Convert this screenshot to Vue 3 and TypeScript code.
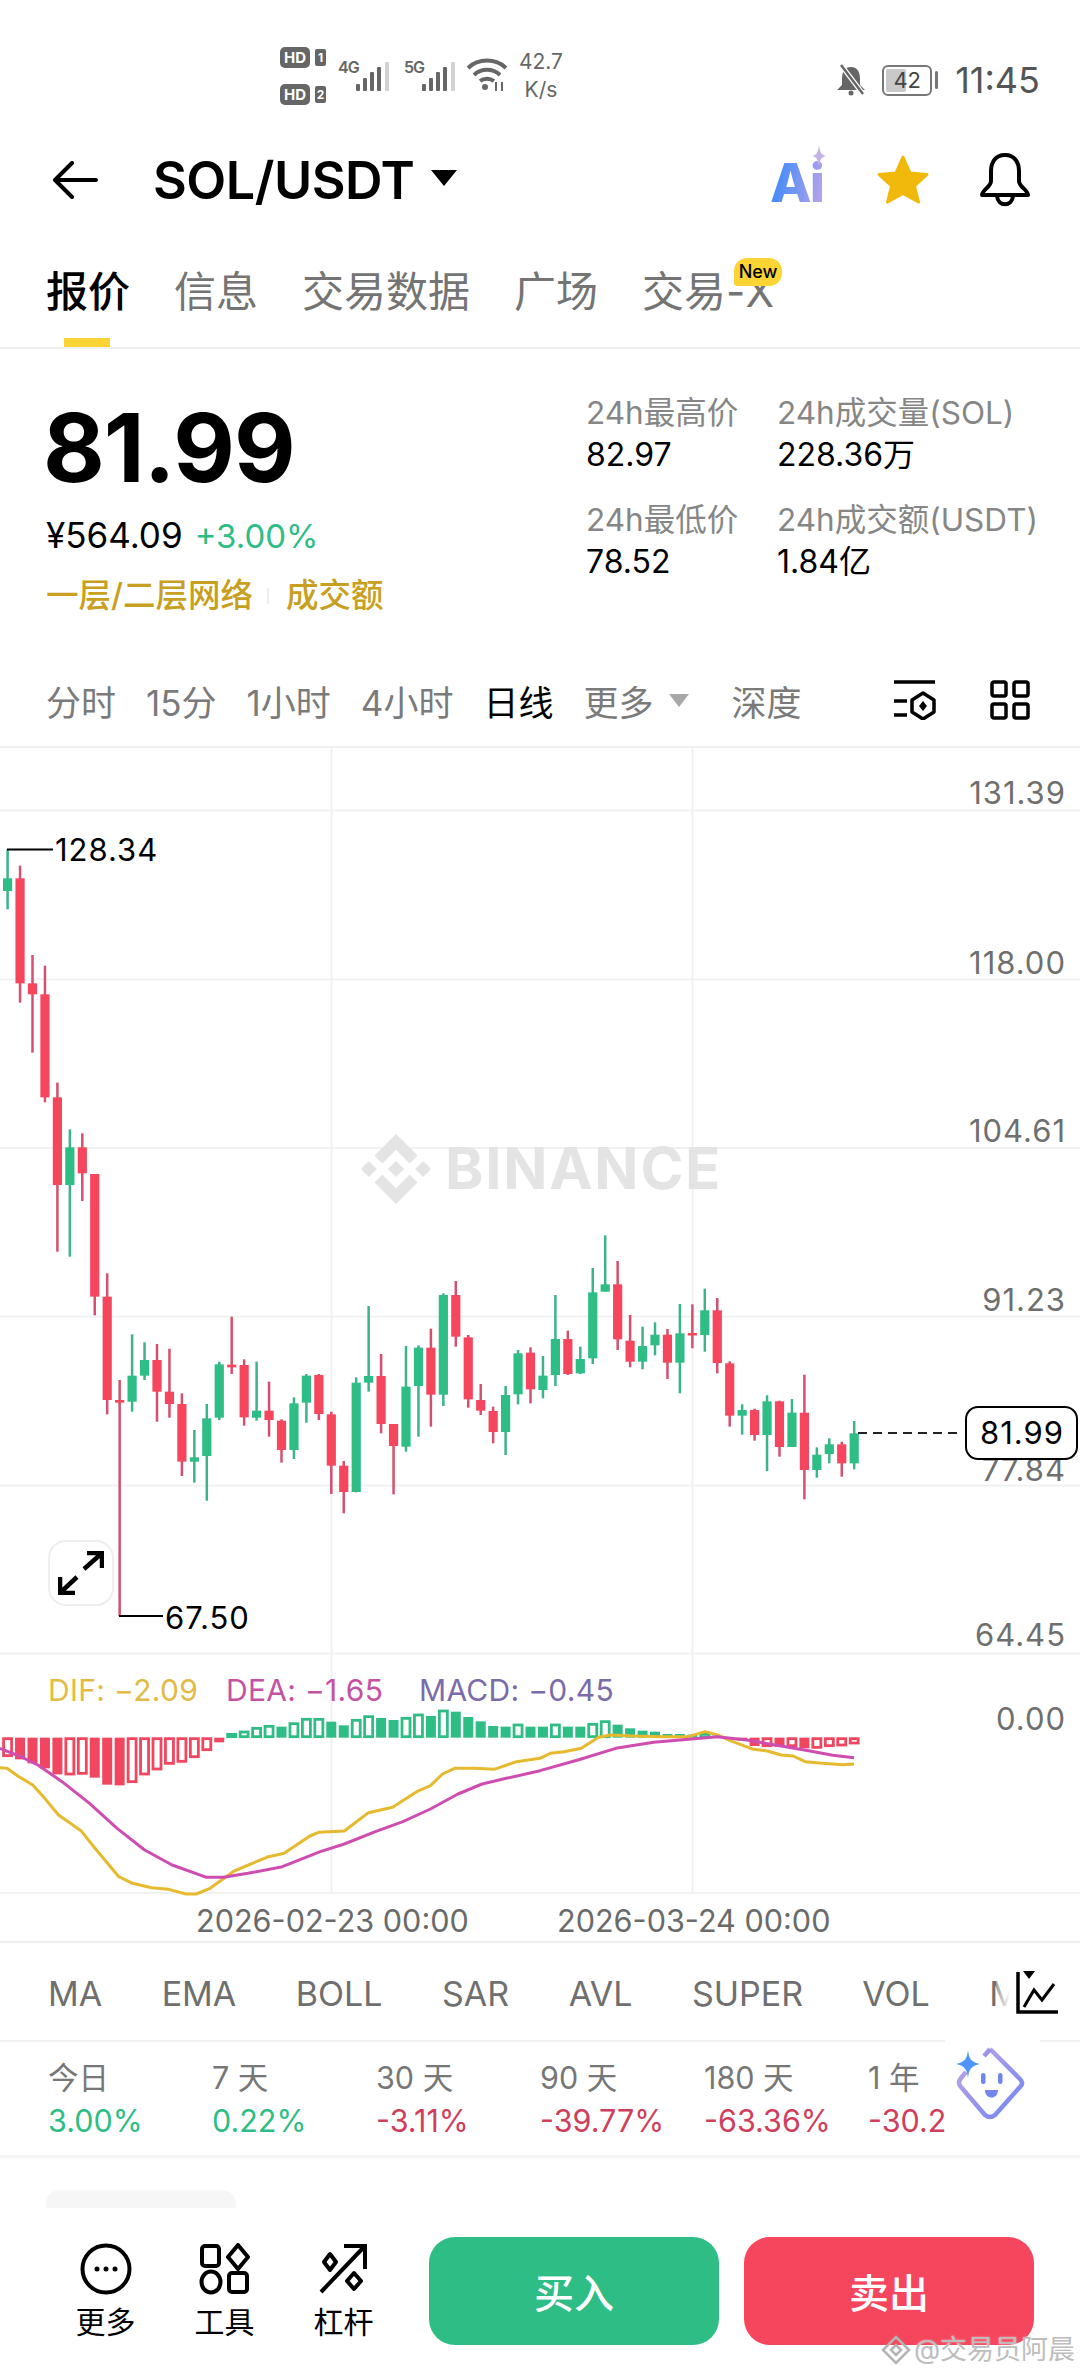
<template>
  <div class="page">
    <!-- status bar -->
    <div class="status-bar">
      <div class="sims">
        <div class="sim"><span class="hd">HD</span><span class="sim-no">1</span></div>
        <div class="sim"><span class="hd">HD</span><span class="sim-no">2</span></div>
      </div>
      <span class="net net-first">4G</span>
      <svg class="signal" width="34" height="30" viewBox="0 0 34 30">
        <rect x="0" y="22" width="4" height="7" rx="1" fill="#666" />
        <rect x="7" y="16" width="4" height="13" rx="1" fill="#666" />
        <rect x="14" y="10" width="4" height="19" rx="1" fill="#666" />
        <rect x="21" y="5" width="4" height="24" rx="1" fill="#666" />
        <rect x="29" y="0" width="4" height="29" rx="1" fill="#d2d2d2" />
      </svg>
      <span class="net">5G</span>
      <svg class="signal" width="34" height="30" viewBox="0 0 34 30">
        <rect x="0" y="22" width="4" height="7" rx="1" fill="#666" />
        <rect x="7" y="16" width="4" height="13" rx="1" fill="#666" />
        <rect x="14" y="10" width="4" height="19" rx="1" fill="#666" />
        <rect x="21" y="5" width="4" height="24" rx="1" fill="#666" />
        <rect x="29" y="0" width="4" height="29" rx="1" fill="#d2d2d2" />
      </svg>
      <svg class="wifi" width="40" height="34" viewBox="0 0 40 34" fill="none" stroke="#666" stroke-width="4">
        <path d="M1 10 C11 0 29 0 39 10" />
        <path d="M7 17 C14 10 26 10 33 17" />
        <path d="M13 23 C17 20 23 20 27 23" />
        <circle cx="18" cy="29" r="3" fill="#666" stroke="none" />
        <path d="M29 24 L29 33 M35 33 L35 24" stroke-width="2" />
      </svg>
      <div class="speed"><span>42.7</span><span>K/s</span></div>
      <div class="status-right">
        <svg width="34" height="32" viewBox="0 0 34 32">
          <path d="M17 3 C10 3 8 9 8 15 L8 21 L3 26 L31 26 L26 21 L26 15 C26 9 24 3 17 3 Z" fill="#666" />
          <circle cx="17" cy="29" r="2.5" fill="#666" />
          <path d="M7 1 L29 30" stroke="#fff" stroke-width="5" />
          <path d="M7 1 L29 30" stroke="#666" stroke-width="2.5" />
        </svg>
        <div class="battery">
          <div class="battery-body"><span class="battery-fill"></span><span class="battery-text">42</span></div>
          <span class="battery-cap"></span>
        </div>
        <span class="clock">11:45</span>
      </div>
    </div>

    <!-- title row -->
    <div class="nav">
      <svg class="back" width="46" height="38" viewBox="0 0 46 38" fill="none" stroke="#000" stroke-width="4" stroke-linecap="round" stroke-linejoin="round">
        <path d="M20 2 L3 19 L20 36 M3 19 L44 19" />
      </svg>
      <span class="pair">SOL/USDT</span>
      <span class="pair-caret"></span>
      <div class="nav-icons">
        <div class="ai-badge">
          <span class="ai-text">Ai</span>
          <svg class="ai-spark" width="14" height="22" viewBox="0 0 14 22"><path d="M7 0 C8 7 9 10 14 11 C9 12 8 15 7 22 C6 15 5 12 0 11 C5 10 6 7 7 0 Z" fill="#c5b4ea" /></svg>
        </div>
        <svg width="54" height="50" viewBox="0 0 54 50">
          <path d="M27 2 L34 18 L51 19.500 L38.500 31 L42.500 47 L27 38.500 L11.500 47 L15.500 31 L3 19.500 L20 18 Z" fill="#f0b90b" stroke="#f0b90b" stroke-width="3" stroke-linejoin="round" />
        </svg>
        <svg width="50" height="54" viewBox="0 0 50 54" fill="none" stroke="#000" stroke-width="4" stroke-linejoin="round">
          <path d="M25 2 C15 2 11 10 11 18 L11 28 C11 34 2 37 2 42 L48 42 C48 37 39 34 39 28 L39 18 C39 10 35 2 25 2 Z" />
          <path d="M17 43 C18 54 32 54 33 43" />
        </svg>
      </div>
    </div>

    <!-- tabs -->
    <div class="tabs">
      <span class="tab tab-active">报价</span>
      <span class="tab">信息</span>
      <span class="tab">交易数据</span>
      <span class="tab">广场</span>
      <span class="tab tab-new">交易-X<em class="new-badge">New</em></span>
    </div>

    <!-- price block -->
    <div class="summary">
      <div class="summary-left">
        <div class="last-price">81.99</div>
        <div class="sub-price"><span>¥564.09</span><span class="up">+3.00%</span></div>
        <div class="tags"><span>一层/二层网络</span><i class="tag-sep"></i><span>成交额</span></div>
      </div>
      <div class="stats">
        <div v-for="s in stats" :key="s.label" class="stat">
          <div class="stat-label">{{ s.label }}</div>
          <div class="stat-value">{{ s.value }}</div>
        </div>
      </div>
    </div>

    <!-- intervals -->
    <div class="intervals">
      <span>分时</span>
      <span>15分</span>
      <span>1小时</span>
      <span>4小时</span>
      <span class="interval-active">日线</span>
      <span class="interval-more">更多<i class="more-caret"></i></span>
      <span class="interval-depth">深度</span>
      <div class="interval-icons">
        <svg width="42" height="40" viewBox="0 0 42 40" fill="none" stroke="#000" stroke-width="3.500">
          <path d="M0 2 L41 2 M0 21 L13 21 M0 35 L13 35" />
          <path d="M29 13 L40 20 L40 32 L29 39 L18 32 L18 20 Z" stroke-linejoin="round" />
          <path d="M29 21 L33 26 L29 31 L25 26 Z" fill="#000" stroke="none" />
        </svg>
        <svg width="40" height="40" viewBox="0 0 40 40" fill="none" stroke="#000" stroke-width="3.500">
          <rect x="2" y="2" width="14" height="14" rx="2" />
          <rect x="24" y="2" width="14" height="14" rx="2" />
          <rect x="2" y="24" width="14" height="14" rx="2" />
          <rect x="24" y="24" width="14" height="14" rx="2" />
        </svg>
      </div>
    </div>

    <!-- chart + macd, everything on one canvas -->
    <div class="chart">
      <svg class="chart-svg" width="1080" height="1193" viewBox="0 748 1080 1193">
        <line v-for="y in gridY" :key="y" x1="0" x2="1080" :y1="y" :y2="y" class="grid" />
        <line x1="331.500" x2="331.500" y1="748" y2="1893" class="grid" />
        <line x1="692.500" x2="692.500" y1="748" y2="1893" class="grid" />

        <g>
          <path transform="translate(361 1134) scale(0.553)" fill="#e4e4e4" d="M38.73 53.2L63.3 28.63l24.58 24.58 14.3-14.3L63.3 0 24.43 38.87l14.3 14.33zM0 63.31l14.3-14.3 14.3 14.3-14.3 14.3L0 63.31zM38.73 73.41L63.3 97.98l24.58-24.58 14.31 14.29-.01.01L63.3 126.61 24.43 87.74l-.02-.02 14.32-14.31zM97.98 63.31l14.3-14.3 14.31 14.3-14.3 14.3-14.31-14.3zM77.83 63.3L63.3 48.77 52.56 59.51l-1.24 1.24-2.54 2.54 14.52 14.52 14.53-14.51z" />
          <text x="445" y="1189" class="mark-text">BINANCE</text>
        </g>

        <g v-for="c in candles" :key="c.x">
          <rect :x="c.x - 1.250" :y="c.high" width="2.500" :height="c.low - c.high" :fill="c.wick" />
          <rect :x="c.x - 4.600" :y="c.top" width="9.200" :height="c.h" :fill="c.color" />
        </g>

        <path d="M7 849.500 L53 849.500" stroke="#000" stroke-width="2" fill="none" />
        <text x="55" y="861" class="lbl-black">128.34</text>
        <path d="M119 1616 L163 1616" stroke="#000" stroke-width="2" fill="none" />
        <text x="165" y="1629" class="lbl-black">67.50</text>

        <text v-for="a in axis" :key="a.t" x="1066" :y="a.y" class="lbl-axis">{{ a.t }}</text>

        <path d="M858 1433 L963 1433" stroke="#222" stroke-width="2" stroke-dasharray="9 6" fill="none" />
        <rect x="966" y="1407" width="111" height="52" rx="12" fill="#fff" stroke="#000" stroke-width="2" />
        <text x="1022" y="1444" class="lbl-last">81.99</text>

        <text x="48" y="1701" class="lgd" fill="#e3bb44">DIF: −2.09</text>
        <text x="226" y="1701" class="lgd" fill="#c551a3">DEA: −1.65</text>
        <text x="419" y="1701" class="lgd" fill="#7a6bab">MACD: −0.45</text>

        <template v-for="b in bars" :key="b.x">
          <rect v-if="b.hollow" :x="b.x - 4" :y="b.y + 1" width="8" :height="Math.max(b.h - 2, 1)" fill="#fff" :stroke="b.color" stroke-width="2.800" />
          <rect v-else :x="b.x - 5" :y="b.y" width="10" :height="b.h" :fill="b.color" />
        </template>
        <polyline :points="difPoints" fill="none" stroke="#e6b92e" stroke-width="3" stroke-linejoin="round" />
        <polyline :points="deaPoints" fill="none" stroke="#cf4db0" stroke-width="3" stroke-linejoin="round" />

        <text x="196" y="1932" class="lbl-date">2026-02-23 00:00</text>
        <text x="557" y="1932" class="lbl-date">2026-03-24 00:00</text>
      </svg>
      <div class="expand">
        <svg width="46" height="44" viewBox="0 0 46 44" fill="none" stroke="#000" stroke-width="4.500">
          <path d="M26 18 L43 3 M29 2 L44 2 L44 17" />
          <path d="M19 26 L3 41 M2 26 L2 42 L17 42" />
        </svg>
      </div>
    </div>

    <!-- indicators -->
    <div class="indicators">
      <div class="indicator-scroll">
        <span>MA</span><span>EMA</span><span>BOLL</span><span>SAR</span><span>AVL</span><span>SUPER</span>
        <i class="indicator-sep"></i>
        <span>VOL</span><span>MACD</span>
      </div>
      <div class="indicator-btn">
        <svg width="44" height="44" viewBox="0 0 44 44" fill="none" stroke="#000">
          <path d="M2 1 L2 41 L42 41" stroke-width="3.500" />
          <path d="M7 0 L19 0 L13 8 Z" fill="#000" stroke="none" />
          <path d="M8 36 L18 19 L26 29 L38 13" stroke-width="3" />
        </svg>
      </div>
    </div>

    <!-- period changes -->
    <div class="periods">
      <div class="period-scroll">
        <div v-for="p in periods" :key="p.name" class="period">
          <div class="period-name">{{ p.name }}</div>
          <div :class="p.up ? 'period-up' : 'period-down'">{{ p.value }}</div>
        </div>
      </div>
      <div class="robot">
        <svg width="72" height="74" viewBox="0 0 72 74" fill="none">
          <defs>
            <linearGradient id="robotStroke" x1="0" y1="0" x2="1" y2="1">
              <stop offset="0" stop-color="#c4a6e6" />
              <stop offset="1" stop-color="#6f86f0" />
            </linearGradient>
          </defs>
          <path d="M36 3 L66 33 Q70 37 66 41 L41 69 Q36 73 31 69 L7 41 Q3 37 7 32 L12 26" stroke="url(#robotStroke)" stroke-width="4.500" stroke-linejoin="round" />
          <path d="M36 3 L30 10" stroke="url(#robotStroke)" stroke-width="4.500" />
          <path d="M14 4 C15 13 17 16 26 18 C17 20 15 23 14 32 C13 23 11 20 2 18 C11 16 13 13 14 4 Z" fill="#4f94f8" />
          <rect x="27" y="27" width="4.500" height="11" rx="2.200" fill="#6f86f0" />
          <rect x="44" y="27" width="4.500" height="11" rx="2.200" fill="#6f86f0" />
          <path d="M31 44 L44 44 C44 54 31 54 31 44 Z" fill="#6f86f0" />
        </svg>
      </div>
    </div>

    <div class="ghost"></div>

    <!-- bottom actions -->
    <div class="actions">
      <div class="tools">
        <div class="tool">
          <svg width="52" height="52" viewBox="0 0 52 52" fill="none" stroke="#000" stroke-width="4">
            <circle cx="26" cy="26" r="23.500" />
            <circle cx="17" cy="26" r="2.500" fill="#000" stroke="none" />
            <circle cx="26" cy="26" r="2.500" fill="#000" stroke="none" />
            <circle cx="35" cy="26" r="2.500" fill="#000" stroke="none" />
          </svg>
          <span>更多</span>
        </div>
        <div class="tool">
          <svg width="52" height="52" viewBox="0 0 52 52" fill="none" stroke="#000" stroke-width="4">
            <rect x="3" y="3" width="17" height="20" rx="3" />
            <path d="M39 2 L49 14 L39 26 L29 14 Z" stroke-linejoin="round" />
            <ellipse cx="12" cy="39" rx="9.500" ry="10.500" />
            <rect x="30" y="30" width="18" height="19" rx="3" />
          </svg>
          <span>工具</span>
        </div>
        <div class="tool">
          <svg width="52" height="52" viewBox="0 0 52 52" fill="none" stroke="#000" stroke-width="4">
            <path d="M3 49 L45 5 M26 3 L47 3 L47 26" />
            <path d="M12 11 L18 19 L12 27 L6 19 Z" stroke-linejoin="round" />
            <path d="M36 30 L43 38 L36 46 L29 38 Z" stroke-linejoin="round" />
          </svg>
          <span>杠杆</span>
        </div>
      </div>
      <button class="trade buy">买入</button>
      <button class="trade sell">卖出</button>
    </div>

    <div class="credit">
      <svg width="30" height="30" viewBox="0 0 30 30" fill="none" stroke="#b4b4b4" stroke-width="2.500">
        <path d="M15 2 L28 15 L15 28 L2 15 Z" />
        <path d="M15 10 L20 15 L15 20 L10 15 Z" />
      </svg>
      <span>@交易员阿晨</span>
    </div>
  </div>
</template>

<script setup lang="ts">
import { computed } from 'vue'

// zoomed-crop units: x = real x * 2.904, y = (real y - base) * 3
const X_SCALE = 2.904
const STEP = 12.45

type Dir = 'G' | 'R'
const rawCandles: [Dir, number, number, number, number][] = [
  ['G', -1052, -872, -965, -927], ['R', -1003, -592, -965, -650], ['R', -735, -442, -650, -617],
  ['R', -703, -293, -617, -308], ['R', -352, 155, -308, -45], ['G', -212, 170, -158, -45],
  ['R', -200, 3, -158, -80], ['R', -78, 346, -78, 290], ['R', 220, 643, 290, 600],
  ['R', 540, 1248, 600, 608], ['G', 403, 635, 527, 605], ['G', 427, 540, 480, 527],
  ['R', 432, 665, 480, 575], ['R', 446, 653, 575, 612], ['R', 580, 828, 612, 785],
  ['G', 690, 848, 772, 785], ['G', 612, 902, 655, 768], ['G', 485, 660, 493, 653],
  ['R', 350, 522, 494, 502], ['R', 478, 677, 495, 652], ['G', 485, 662, 632, 653],
  ['R', 545, 710, 632, 660], ['R', 658, 788, 662, 750], ['G', 592, 777, 610, 750],
  ['G', 522, 668, 527, 608], ['R', 522, 660, 525, 642], ['R', 635, 882, 643, 797],
  ['R', 783, 940, 797, 876], ['G', 532, 877, 548, 876], ['G', 318, 575, 528, 548],
  ['R', 462, 700, 528, 672], ['R', 672, 883, 672, 738], ['G', 438, 755, 560, 740],
  ['G', 436, 710, 443, 558], ['R', 386, 680, 443, 584], ['G', 280, 618, 285, 584],
  ['R', 243, 440, 285, 410], ['R', 405, 623, 412, 598], ['R', 552, 645, 600, 632],
  ['R', 620, 730, 633, 696], ['G', 558, 765, 585, 696], ['G', 450, 613, 460, 583],
  ['R', 442, 610, 458, 568], ['G', 468, 595, 527, 570], ['G', 285, 558, 417, 525],
  ['R', 392, 525, 417, 522], ['G', 440, 522, 477, 520], ['G', 204, 492, 277, 475],
  ['G', 106, 275, 253, 275], ['R', 183, 450, 253, 418], ['R', 345, 502, 422, 485],
  ['G', 380, 508, 438, 485], ['G', 367, 466, 404, 436], ['R', 387, 537, 404, 488],
  ['G', 312, 580, 400, 488], ['R', 313, 445, 399, 406], ['G', 266, 455, 331, 405],
  ['R', 294, 520, 331, 489], ['R', 484, 680, 490, 647], ['G', 613, 704, 630, 647],
  ['R', 626, 722, 630, 705], ['G', 586, 813, 604, 705], ['R', 602, 770, 604, 741],
  ['G', 597, 741, 638, 741], ['R', 524, 898, 638, 810], ['G', 742, 833, 764, 810],
  ['G', 715, 790, 733, 762], ['R', 725, 830, 733, 790], ['G', 663, 808, 700, 790]
]

const py = (z: number) => 1200 + z / 3

const candles = computed(() =>
  rawCandles.map(([dir, hi, lo, top, bot], i) => ({
    x: 7.6 + STEP * i,
    high: py(hi),
    low: py(lo),
    top: py(top),
    h: Math.max((bot - top) / 3, 2.5),
    color: dir === 'G' ? '#2ebd85' : '#f6465d',
    wick: dir === 'G' ? '#3cb389' : '#d5506f'
  }))
)

// [y of the far end, hollow], red below the zero line, green above
const rawBars: [number, boolean][] = [
  [410, true], [418, false], [430, false], [445, false], [463, false], [465, true], [463, true],
  [473, false], [494, false], [496, false], [488, true], [465, true], [450, true], [433, true],
  [427, true], [413, true], [392, true], [367, false], [340, true], [333, true], [322, true],
  [316, true], [320, false], [308, true], [295, true], [295, true], [305, false], [316, false],
  [298, true], [287, true], [294, false], [300, false], [292, true], [282, true], [288, false],
  [270, true], [275, false], [291, false], [304, false], [318, false], [320, false], [312, true],
  [320, false], [320, false], [312, true], [320, false], [320, false], [310, true], [302, true],
  [314, false], [325, false], [332, false], [335, false], [342, false], [342, false], [344, false],
  [338, true], [347, false], [358, false], [362, false], [378, false], [380, true], [380, false],
  [380, true], [385, false], [385, true], [380, true], [378, true], [372, true]
]

const ZERO = 353

const bars = computed(() =>
  rawBars.map(([end, hollow], i) => ({
    x: 7.6 + STEP * i,
    y: 1620 + Math.min(end, ZERO) / 3,
    h: Math.max(Math.abs(end - ZERO) / 3, 2),
    hollow,
    color: end > ZERO ? '#f0465f' : '#2ebd85'
  }))
)

const toPoints = (left: number[][], right: number[][]) =>
  [
    ...left.map(([x, y]) => `${x / X_SCALE},${1620 + y / 3}`),
    ...right.map(([x, y]) => `${540 + x / X_SCALE},${1620 + y / 3}`)
  ].join(' ')

const difPoints = toPoints(
  [[0, 443], [20, 445], [55, 470], [95, 495], [130, 535], [170, 585], [235, 632], [280, 690], [345, 770], [385, 790], [440, 803], [490, 808], [540, 822], [570, 822], [610, 805], [680, 753], [780, 710], [825, 700], [900, 648], [925, 637], [1000, 633], [1070, 578], [1140, 562], [1210, 515], [1250, 497], [1285, 462], [1320, 445], [1380, 445], [1435, 448], [1500, 425]],
  [[0, 415], [30, 400], [70, 395], [120, 385], [170, 352], [205, 345], [270, 348], [350, 350], [430, 350], [480, 335], [515, 345], [560, 365], [620, 388], [660, 393], [700, 405], [735, 408], [770, 425], [820, 430], [880, 434], [912, 432]]
)

const deaPoints = toPoints(
  [[0, 385], [60, 410], [110, 435], [180, 485], [260, 550], [340, 625], [420, 690], [500, 735], [600, 772], [650, 772], [720, 760], [820, 740], [930, 695], [1000, 672], [1090, 635], [1170, 605], [1250, 567], [1330, 522], [1400, 492], [1470, 475]],
  [[0, 452], [110, 420], [220, 385], [330, 367], [440, 357], [515, 350], [600, 360], [700, 378], [780, 392], [850, 406], [912, 413]]
)

const gridY = [810.5, 979.5, 1148, 1316.5, 1485.5, 1653.5, 1893]

const axis = [
  { t: '131.39', y: 804 },
  { t: '118.00', y: 974 },
  { t: '104.61', y: 1142 },
  { t: '91.23', y: 1311 },
  { t: '77.84', y: 1481 },
  { t: '64.45', y: 1646 },
  { t: '0.00', y: 1730 }
]

const stats = [
  { label: '24h最高价', value: '82.97' },
  { label: '24h成交量(SOL)', value: '228.36万' },
  { label: '24h最低价', value: '78.52' },
  { label: '24h成交额(USDT)', value: '1.84亿' }
]

const periods = [
  { name: '今日', value: '3.00%', up: true },
  { name: '7 天', value: '0.22%', up: true },
  { name: '30 天', value: '-3.11%', up: false },
  { name: '90 天', value: '-39.77%', up: false },
  { name: '180 天', value: '-63.36%', up: false },
  { name: '1 年', value: '-30.25%', up: false }
]
</script>

<style>
body {
  margin: 0;
  background: #fff;
}
</style>

<style scoped>
.page {
  position: relative;
  width: 1080px;
  height: 2376px;
  overflow: hidden;
  background: #fff;
  color: #000;
  font-family: Inter, "Noto Sans CJK SC", sans-serif;
}

.status-bar {
  height: 120px;
  box-sizing: border-box;
  padding: 47px 40px 0 280px;
  display: flex;
  align-items: flex-start;
  color: #666;
}

.sims {
  display: flex;
  flex-direction: column;
  gap: 16px;
  width: 58px;
}

.sim {
  display: flex;
  align-items: center;
  gap: 5px;
}

.hd {
  width: 30px;
  height: 21px;
  line-height: 21px;
  border-radius: 5px;
  background: #666;
  color: #fff;
  font-size: 15px;
  font-weight: 700;
  text-align: center;
}

.sim-no {
  width: 11px;
  height: 17px;
  line-height: 17px;
  border-radius: 2px;
  background: #666;
  color: #fff;
  font-size: 12px;
  font-weight: 700;
  text-align: center;
}

.net {
  width: 18px;
  margin: 10px 0 0 14px;
  font-size: 16px;
  font-weight: 600;
  letter-spacing: -1px;
  white-space: nowrap;
}

.net-first {
  margin-left: 0;
}

.signal {
  margin-top: 15px;
}

.wifi {
  margin: 11px 0 0 11px;
}

.speed {
  margin-left: 9px;
  width: 50px;
  display: flex;
  flex-direction: column;
  align-items: center;
  gap: 7px;
  font-size: 21px;
  line-height: 21px;
  margin-top: 4px;
}

.status-right {
  margin-left: auto;
  margin-top: 11px;
  display: flex;
  align-items: center;
  gap: 14px;
}

.battery {
  display: flex;
  align-items: center;
  gap: 3px;
}

.battery-body {
  position: relative;
  width: 46px;
  height: 27px;
  border: 2.500px solid #777;
  border-radius: 6px;
  overflow: hidden;
  text-align: center;
  font-size: 22px;
  line-height: 27px;
  color: #444;
}

.battery-fill {
  position: absolute;
  left: 2px;
  top: 2px;
  bottom: 2px;
  width: 20px;
  background: #c9c9c9;
  border-radius: 2px;
}

.battery-text {
  position: relative;
}

.battery-cap {
  width: 3px;
  height: 18px;
  background: #777;
  border-radius: 2px;
}

.clock {
  margin-left: 3px;
  font-size: 36px;
  color: #555;
}

.nav {
  height: 120px;
  display: flex;
  align-items: center;
  padding: 0 50px 0 52px;
}

.pair {
  margin-left: 55px;
  font-size: 52px;
  font-weight: 600;
  letter-spacing: -0.5px;
}

.pair-caret {
  margin-left: 17px;
  width: 0;
  height: 0;
  border-left: 13px solid transparent;
  border-right: 13px solid transparent;
  border-top: 16px solid #000;
  margin-top: -4px;
}

.nav-icons {
  margin-left: auto;
  display: flex;
  align-items: center;
  gap: 50px;
}

.ai-badge {
  position: relative;
  width: 56px;
  margin-top: 6px;
}

.ai-text {
  display: block;
  font-size: 54px;
  line-height: 50px;
  font-weight: 800;
  letter-spacing: -2px;
  background: linear-gradient(100deg, #4d8df8 20%, #b3a3ea 90%);
  -webkit-background-clip: text;
  background-clip: text;
  color: transparent;
}

.ai-spark {
  position: absolute;
  right: 0;
  top: -13px;
}

.tabs {
  height: 107px;
  display: flex;
  gap: 44px;
  padding: 0 46px;
  border-bottom: 2px solid #f0f0f0;
  font-size: 42px;
  line-height: 104px;
  color: #747474;
}

.tab {
  position: relative;
  white-space: nowrap;
}

.tab-active {
  color: #000;
  font-weight: 500;
}

.tab-active::after {
  content: "";
  position: absolute;
  left: 18px;
  bottom: 0;
  width: 46px;
  height: 9px;
  background: #fcd535;
}

.new-badge {
  position: absolute;
  left: 92px;
  top: 18px;
  width: 48px;
  height: 28px;
  border-radius: 13px 13px 13px 3px;
  background: #fcd535;
  color: #000;
  font-size: 18px;
  font-style: normal;
  font-weight: 500;
  line-height: 28px;
  text-align: center;
}

.summary {
  height: 305px;
  display: flex;
  padding-left: 46px;
}

.summary-left {
  width: 540px;
}

.last-price {
  margin-top: 49px;
  margin-left: -3px;
  font-size: 95px;
  line-height: 100px;
  font-weight: 700;
  letter-spacing: -1px;
}

.sub-price {
  margin-top: 15px;
  display: flex;
  gap: 12px;
  align-items: baseline;
  font-size: 35px;
  line-height: 44px;
}

.up {
  color: #2ebd85;
  font-size: 33px;
}

.tags {
  margin-top: 16px;
  display: flex;
  align-items: center;
  font-size: 32.5px;
  line-height: 44px;
  color: #c99f21;
  font-weight: 500;
}

.tag-sep {
  width: 2px;
  height: 16px;
  margin: 0 17px 0 14px;
  background: #eee;
}

.stats {
  display: grid;
  grid-template-columns: 191px auto;
  grid-auto-rows: 107px;
  padding-top: 42px;
}

.stat-label {
  font-size: 31.5px;
  line-height: 44px;
  color: #868686;
  white-space: nowrap;
}

.stat-value {
  font-size: 32px;
  line-height: 40px;
}

.intervals {
  height: 92px;
  display: flex;
  align-items: center;
  gap: 30px;
  padding: 0 50px 0 46px;
  font-size: 35px;
  color: #7a7a7a;
  border-bottom: 2px solid #f0f0f0;
}

.interval-active {
  color: #000;
}

.interval-more {
  display: flex;
  align-items: center;
}

.more-caret {
  margin-left: 16px;
  width: 0;
  height: 0;
  border-left: 10px solid transparent;
  border-right: 10px solid transparent;
  border-top: 13px solid #a8a8a8;
}

.interval-depth {
  margin-left: 12px;
}

.interval-icons {
  margin-left: auto;
  display: flex;
  align-items: center;
  gap: 54px;
}

.chart {
  position: relative;
  height: 1193px;
  border-bottom: 2px solid #f0f0f0;
}

.chart-svg {
  display: block;
}

.grid {
  stroke: #f1f1f1;
  stroke-width: 2;
}

.mark-text {
  font-size: 58px;
  font-weight: 700;
  letter-spacing: 1.800px;
  fill: #e4e4e4;
}

.lbl-black {
  font-size: 31px;
  fill: #000;
  letter-spacing: 1px;
}

.lbl-axis {
  font-size: 31px;
  fill: #6f6f6f;
  text-anchor: end;
  letter-spacing: 1px;
}

.lbl-last {
  font-size: 31px;
  fill: #000;
  text-anchor: middle;
  letter-spacing: 1px;
}

.lgd {
  font-size: 30px;
  letter-spacing: 0.300px;
}

.lbl-date {
  font-size: 30.6px;
  fill: #6a6a6a;
}

.expand {
  position: absolute;
  left: 48px;
  top: 792px;
  width: 66px;
  height: 66px;
  box-sizing: border-box;
  border: 2px solid #eee;
  border-radius: 18px;
  background: #fff;
  display: flex;
  align-items: center;
  justify-content: center;
}

.indicators {
  position: relative;
  height: 97px;
  border-bottom: 2px solid #f1f1f1;
  overflow: hidden;
}

.indicator-scroll {
  display: flex;
  align-items: center;
  height: 100px;
  gap: 59.5px;
  padding-left: 48px;
  font-size: 34px;
  color: #6f6f6f;
  white-space: nowrap;
}

.indicator-sep {
  width: 2px;
  height: 40px;
  margin: 0 -30px;
  background: #eee;
}

.indicator-btn {
  position: absolute;
  right: 0;
  top: 0;
  width: 84px;
  height: 96px;
  padding: 28px 0 0 20px;
  box-sizing: border-box;
  background: linear-gradient(90deg, rgba(255, 255, 255, 0.3), #fff 14px);
}

.periods {
  position: relative;
  height: 113px;
  border-bottom: 3px solid #f4f4f4;
  overflow: visible;
}

.period-scroll {
  width: 946px;
  overflow: hidden;
  display: flex;
  padding: 14px 0 0 48px;
  box-sizing: border-box;
}

.period {
  flex: 0 0 164px;
  font-size: 30.5px;
  white-space: nowrap;
}

.period-name {
  color: #777;
  line-height: 44px;
}

.period-up {
  color: #2ebd85;
  line-height: 42px;
}

.period-down {
  color: #cf3f5c;
  line-height: 42px;
}

.robot {
  position: absolute;
  left: 945px;
  top: -4px;
  width: 95px;
  height: 108px;
  box-sizing: border-box;
  padding: 8px 0 0 9px;
  background: #fff;
}

.ghost {
  width: 190px;
  height: 18px;
  margin: 32px 0 0 46px;
  border-radius: 14px 14px 0 0;
  background: #f6f6f6;
}

.actions {
  margin-top: 29px;
  display: flex;
  padding-left: 46px;
}

.tools {
  width: 358px;
  margin-right: 25px;
  display: flex;
}

.tool {
  flex: 0 0 119px;
  display: flex;
  flex-direction: column;
  align-items: center;
  padding-top: 6px;
  font-size: 30px;
  line-height: 40px;
  gap: 7px;
}

.trade {
  width: 290px;
  height: 108px;
  border: none;
  border-radius: 26px;
  color: #fff;
  font-family: inherit;
  font-size: 40px;
  font-weight: 500;
}

.buy {
  background: #2ebd85;
  margin-right: 25px;
}

.sell {
  background: #f6465d;
}

.credit {
  position: absolute;
  right: 5px;
  top: 2335px;
  display: flex;
  align-items: center;
  gap: 3px;
  font-size: 27px;
  line-height: 30px;
  color: #bdbdbd;
  text-shadow: 0 0 2px rgba(255, 255, 255, 0.6);
}
</style>
